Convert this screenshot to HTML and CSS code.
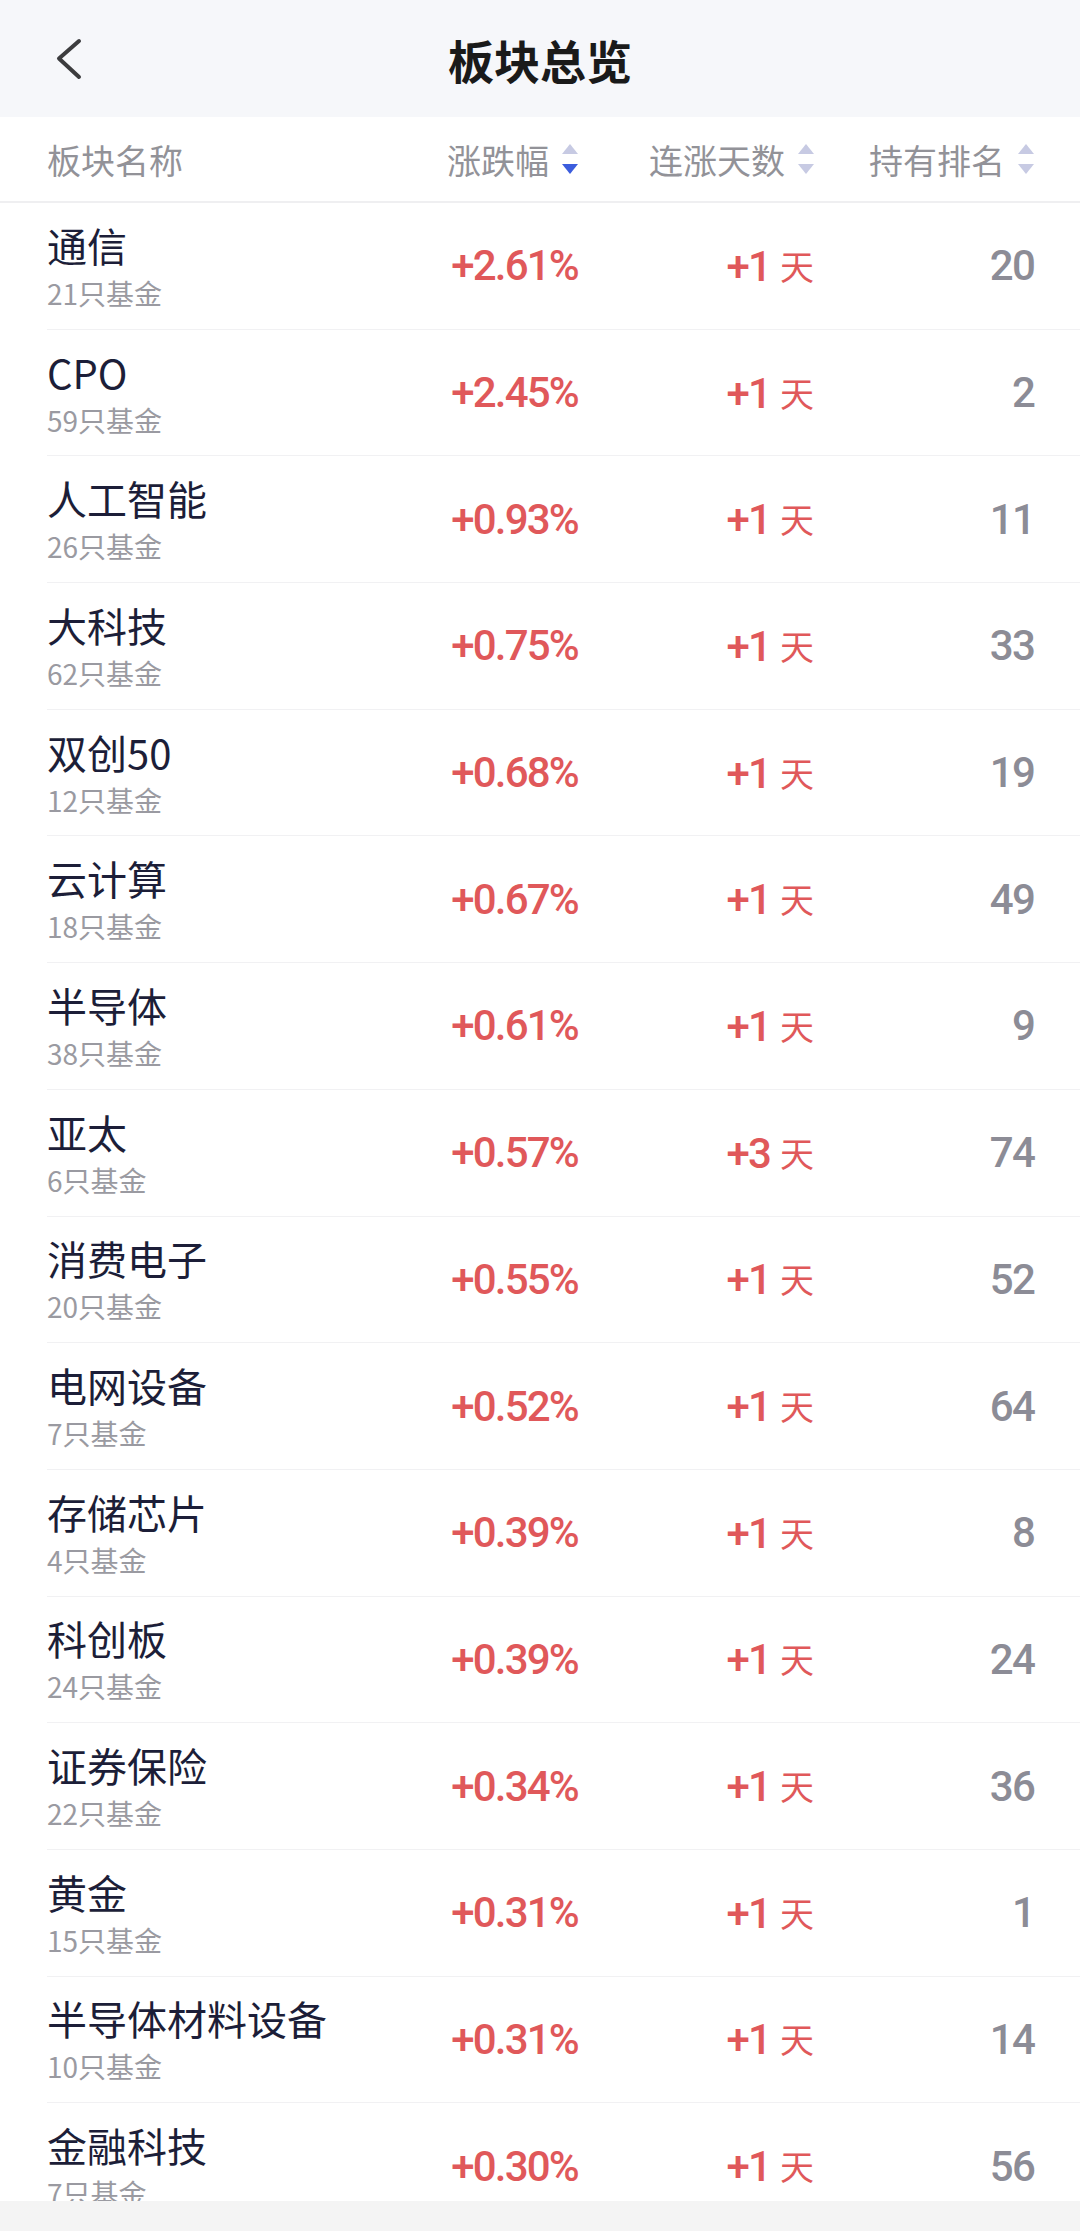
FILE: index.html
```html
<!DOCTYPE html>
<html>
  <head>
    <meta charset="utf-8" />
    <title>板块总览</title>
    <link rel="stylesheet" href="styles.css">
  </head>
  <body>
    <div class="topbar">
      <div class="back">
        <svg width="26" height="42" viewBox="0 0 26 42">
          <polyline points="23,3 3,20.5 23,39" fill="none" stroke="#3c3c3e" stroke-width="4" stroke-linecap="round" stroke-linejoin="round" />
        </svg>
      </div>
      <div class="title">板块总览</div>
      <div></div>
    </div>

    <div class="thead">
      <div class="th">板块名称</div>
      <div class="th sort">
        涨跌幅
        <svg class="sort-icon" width="16" height="30" viewBox="0 0 16 30">
          <polygon points="8,0 16,10 0,10" fill="#c7cae3" />
          <polygon points="0,20 16,20 8,30" fill="#3c5ddd" />
        </svg>
      </div>
      <div class="th sort">
        连涨天数
        <svg class="sort-icon" width="16" height="30" viewBox="0 0 16 30">
          <polygon points="8,0 16,10 0,10" fill="#c7cae3" />
          <polygon points="0,20 16,20 8,30" fill="#c7cae3" />
        </svg>
      </div>
      <div class="th sort">
        持有排名
        <svg class="sort-icon" width="16" height="30" viewBox="0 0 16 30">
          <polygon points="8,0 16,10 0,10" fill="#c7cae3" />
          <polygon points="0,20 16,20 8,30" fill="#c7cae3" />
        </svg>
      </div>
    </div>

    <div class="list">
      <div class="row">
        <div class="name-cell"><div class="name">通信</div><div class="count">21只基金</div></div>
        <div class="num up">+2.61%</div>
        <div class="num up">+1<span class="day">天</span></div>
        <div class="num rank">20</div>
      </div>
      <div class="row">
        <div class="name-cell"><div class="name">CPO</div><div class="count">59只基金</div></div>
        <div class="num up">+2.45%</div>
        <div class="num up">+1<span class="day">天</span></div>
        <div class="num rank">2</div>
      </div>
      <div class="row">
        <div class="name-cell"><div class="name">人工智能</div><div class="count">26只基金</div></div>
        <div class="num up">+0.93%</div>
        <div class="num up">+1<span class="day">天</span></div>
        <div class="num rank">11</div>
      </div>
      <div class="row">
        <div class="name-cell"><div class="name">大科技</div><div class="count">62只基金</div></div>
        <div class="num up">+0.75%</div>
        <div class="num up">+1<span class="day">天</span></div>
        <div class="num rank">33</div>
      </div>
      <div class="row">
        <div class="name-cell"><div class="name">双创50</div><div class="count">12只基金</div></div>
        <div class="num up">+0.68%</div>
        <div class="num up">+1<span class="day">天</span></div>
        <div class="num rank">19</div>
      </div>
      <div class="row">
        <div class="name-cell"><div class="name">云计算</div><div class="count">18只基金</div></div>
        <div class="num up">+0.67%</div>
        <div class="num up">+1<span class="day">天</span></div>
        <div class="num rank">49</div>
      </div>
      <div class="row">
        <div class="name-cell"><div class="name">半导体</div><div class="count">38只基金</div></div>
        <div class="num up">+0.61%</div>
        <div class="num up">+1<span class="day">天</span></div>
        <div class="num rank">9</div>
      </div>
      <div class="row">
        <div class="name-cell"><div class="name">亚太</div><div class="count">6只基金</div></div>
        <div class="num up">+0.57%</div>
        <div class="num up">+3<span class="day">天</span></div>
        <div class="num rank">74</div>
      </div>
      <div class="row">
        <div class="name-cell"><div class="name">消费电子</div><div class="count">20只基金</div></div>
        <div class="num up">+0.55%</div>
        <div class="num up">+1<span class="day">天</span></div>
        <div class="num rank">52</div>
      </div>
      <div class="row">
        <div class="name-cell"><div class="name">电网设备</div><div class="count">7只基金</div></div>
        <div class="num up">+0.52%</div>
        <div class="num up">+1<span class="day">天</span></div>
        <div class="num rank">64</div>
      </div>
      <div class="row">
        <div class="name-cell"><div class="name">存储芯片</div><div class="count">4只基金</div></div>
        <div class="num up">+0.39%</div>
        <div class="num up">+1<span class="day">天</span></div>
        <div class="num rank">8</div>
      </div>
      <div class="row">
        <div class="name-cell"><div class="name">科创板</div><div class="count">24只基金</div></div>
        <div class="num up">+0.39%</div>
        <div class="num up">+1<span class="day">天</span></div>
        <div class="num rank">24</div>
      </div>
      <div class="row">
        <div class="name-cell"><div class="name">证券保险</div><div class="count">22只基金</div></div>
        <div class="num up">+0.34%</div>
        <div class="num up">+1<span class="day">天</span></div>
        <div class="num rank">36</div>
      </div>
      <div class="row">
        <div class="name-cell"><div class="name">黄金</div><div class="count">15只基金</div></div>
        <div class="num up">+0.31%</div>
        <div class="num up">+1<span class="day">天</span></div>
        <div class="num rank">1</div>
      </div>
      <div class="row">
        <div class="name-cell"><div class="name">半导体材料设备</div><div class="count">10只基金</div></div>
        <div class="num up">+0.31%</div>
        <div class="num up">+1<span class="day">天</span></div>
        <div class="num rank">14</div>
      </div>
      <div class="row">
        <div class="name-cell"><div class="name">金融科技</div><div class="count">7只基金</div></div>
        <div class="num up">+0.30%</div>
        <div class="num up">+1<span class="day">天</span></div>
        <div class="num rank">56</div>
      </div>
    </div>

    <div class="bottom-bar"></div>
  </body>
</html>
```

FILE: styles.css
```css
body {
  margin: 0;
  background: #fff;
  font-family: "Noto Sans CJK SC", "Noto Sans", sans-serif;
  overflow: hidden;
}

.topbar {
  height: 117px;
  background: #f6f7fa;
  display: grid;
  grid-template-columns: 1fr auto 1fr;
  align-items: center;
}

.back {
  display: flex;
  padding-left: 56px;
}

.title {
  font-size: 46px;
  font-weight: 700;
  color: #1a1a1a;
  line-height: 1;
}

.thead,
.row {
  display: grid;
  grid-template-columns: 1fr 200px 236px 220px;
  align-items: center;
}

.thead {
  height: 84px;
  padding: 0 46px 0 47px;
  border-bottom: 2px solid #efeff1;
  font-size: 34px;
  color: #929298;
}

.th.sort {
  display: flex;
  justify-content: flex-end;
  align-items: center;
  gap: 13px;
}

.row {
  box-sizing: border-box;
  height: 126.7px;
  margin-left: 47px;
  padding-right: 46px;
  border-bottom: 1px solid #f1f1f3;
}

.name-cell {
  display: flex;
  flex-direction: column;
  gap: 6px;
}

.name {
  font-size: 40px;
  line-height: 48px;
  color: #1c1e38;
  white-space: nowrap;
}

.count {
  font-size: 28px;
  line-height: 36px;
  color: #9a9aa1;
}

/* DIN-like narrow figures */
.num {
  text-align: right;
  font-family: Roboto, "Liberation Sans", sans-serif;
  font-size: 42px;
  font-weight: 500;
  letter-spacing: -1.8px;
  white-space: nowrap;
}

.up {
  color: #e0585a;
}

.rank {
  color: #8c8c96;
}

.day {
  margin-left: 10px;
  font-family: "Noto Sans CJK SC", sans-serif;
  font-size: 34px;
  font-weight: 400;
  letter-spacing: 0;
  vertical-align: 1px;
}

/* grey strip under the list */
.bottom-bar {
  position: fixed;
  left: 0;
  right: 0;
  bottom: 0;
  height: 30px;
  background: #f4f4f4;
}
```
